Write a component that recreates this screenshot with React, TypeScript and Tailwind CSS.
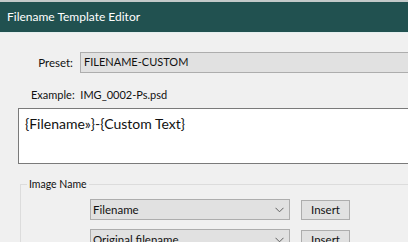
import React from 'react';

const Chevron = () => (
  <svg width="9" height="6" viewBox="0 0 9 6" className="text-[#606060]">
    <path d="M0.5 0.8 L4.5 4.8 L8.5 0.8" fill="none" stroke="currentColor" strokeWidth="1" />
  </svg>
);

const TokenRow = ({ value }: { value: string }) => (
  <div className="flex items-center">
    <div className="w-[200px] h-[21px] ml-[69px] bg-[#e1e1e1] border border-[#adadad] flex items-center justify-between pl-[2px] pr-[5px]">
      <span className="text-[11.5px] text-[#111]">{value}</span>
      <Chevron />
    </div>
    <button className="ml-[11px] w-[49px] h-[20px] bg-[#e1e1e1] border border-[#adadad] text-[11.5px] text-[#111] leading-none">
      Insert
    </button>
  </div>
);

export default function App() {
  return (
    <div
      className="w-[408px] h-[242px] overflow-hidden bg-[#f0f0f0] border-t-2 border-[#c3c9c9]"
      style={{ fontFamily: 'Lato, "Noto Sans", sans-serif' }}
    >
      {/* Title bar */}
      <div className="h-[31px] bg-[#215150] border-b border-[#e4eeee] flex items-center px-[7px]">
        <span className="text-white text-[12px] -mt-[1px]">Filename Template Editor</span>
      </div>

      {/* Preset */}
      <div className="mt-[19px] flex items-center">
        <span className="w-[74px] text-right pr-[1px] text-[11.5px] text-[#111]">Preset:</span>
        <div className="ml-[6px] flex-1 -mr-[4px] h-[21px] bg-[#e1e1e1] border border-[#adadad] flex items-center px-[3px]">
          <span className="text-[11px] text-[#111]">FILENAME-CUSTOM</span>
        </div>
      </div>

      {/* Example */}
      <div className="mt-[14px] pl-[31px] text-[11px] text-[#111] leading-[16px]">
        Example:&nbsp; IMG_0002-Ps.psd
      </div>

      {/* Template text */}
      <div className="mt-[5px] ml-[18px] -mr-[4px] h-[56px] bg-white border border-[#7a7a7a] px-[6px] pt-[2px]">
        <span className="text-[14px] text-[#111]">{'{Filename»}-{Custom Text}'}</span>
      </div>

      {/* Image Name group */}
      <fieldset className="mt-[14px] ml-[20px] -mr-[4px] border border-[#dcdcdc] pt-[9px] flex flex-col gap-[9px]">
        <legend className="ml-[6px] px-[2px] text-[10.5px] text-[#111] leading-[12px]">Image Name</legend>
        <TokenRow value="Filename" />
        <TokenRow value="Original filename" />
      </fieldset>
    </div>
  );
}
